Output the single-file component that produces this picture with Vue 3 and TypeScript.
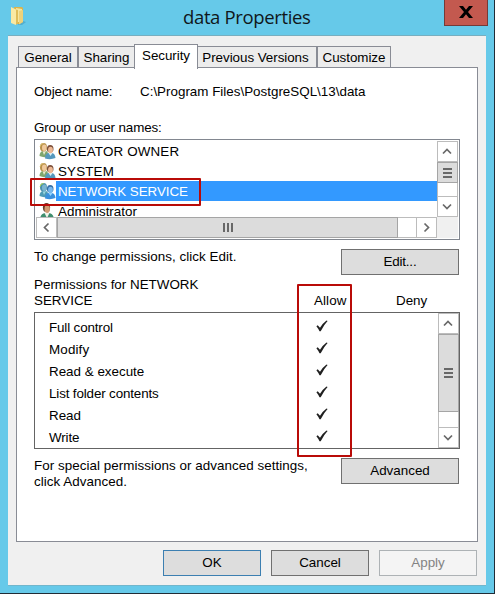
<script setup lang="ts">
interface Principal { name: string; kind: 'group' | 'user'; cls: string; selected?: boolean }

const tabs: { label: string; cls: string }[] = [
  { label: 'General', cls: 'general' },
  { label: 'Sharing', cls: 'sharing' },
  { label: 'Security', cls: 'active' },
  { label: 'Previous Versions', cls: 'previous' },
  { label: 'Customize', cls: 'customize' },
]
const principals: Principal[] = [
  { name: 'CREATOR OWNER', kind: 'group', cls: 'loose' },
  { name: 'SYSTEM', kind: 'group', cls: 'loose' },
  { name: 'NETWORK SERVICE', kind: 'group', cls: '', selected: true },
  { name: 'Administrator', kind: 'user', cls: '' },
]
const permissions: { label: string; cls: string }[] = [
  { label: 'Full control', cls: 'snug' },
  { label: 'Modify', cls: 'loose' },
  { label: 'Read & execute', cls: '' },
  { label: 'List folder contents', cls: 'snug' },
  { label: 'Read', cls: '' },
  { label: 'Write', cls: 'snug' },
]
</script>

<template>
  <div class="window">
    <header class="titlebar">
      <svg class="folder" width="18" height="21" viewBox="0 0 18 21">
        <path d="M10 14l6 2-4 3H8z" fill="#4297b8" opacity=".55" />
        <path d="M4 1h8l1 1v14l-4 2H4z" fill="#d9b44c" />
        <path d="M6 2l6 1v13H6z" fill="#f5e6a0" />
        <path d="M1 1l5 2.500v15.500l-5-2z" fill="#f9e9a3" />
        <path d="M6 3.500l2 .5v13l-2 2z" fill="#dfbd59" />
        <path d="M9 5l4-1v12l-4 2.500z" fill="#eed27b" />
      </svg>
      <h1>data Properties</h1>
      <button class="close" aria-label="Close">
        <svg width="14" height="12" viewBox="0 0 14 12">
          <path d="M0 0h4l3 3.800L10 0h4L9 6l5 6h-4L7 8.200 4 12H0l5-6z" fill="#000" />
        </svg>
      </button>
    </header>

    <main class="client">
      <nav class="tabs">
        <button v-for="t in tabs" :key="t.label" class="tab" :class="t.cls">{{ t.label }}</button>
      </nav>
      <section class="panel">
        <div class="object"><span class="key">Object name:</span><span class="path">C:\Program Files\PostgreSQL\13\data</span></div>
        <div class="group-label">Group or user names:</div>

        <div class="listbox">
          <div class="list-rows">
            <div v-for="p in principals" :key="p.name" class="principal" :class="{ selected: p.selected }">
              <svg class="people" width="18" height="18" viewBox="0 0 18 18">
                <template v-if="p.kind === 'group'">
                  <path d="M1.500 14q0-4.500 4-5.500l4 1 1 5q-5 1.500-9-.5z" :fill="p.selected ? '#4f9bb5' : '#7fa66e'" />
                  <path d="M4.500 9l1.500 4 2-4z" :fill="p.selected ? '#9bd6df' : '#e9ecd2'" />
                  <ellipse cx="5.500" cy="5.300" rx="3.500" ry="4.300" :fill="p.selected ? '#4a90ac' : '#b8914b'" />
                  <ellipse cx="6.300" cy="5.800" rx="2.300" ry="3.200" :fill="p.selected ? '#7bb5d1' : '#f0c99c'" />
                  <path d="M2 4.500q.5-3 3.500-3" fill="none" :stroke="p.selected ? '#b4d84e' : '#dfc274'" stroke-width="1" />
                  <path d="M7 16.500q0-5 3.500-5.500h3.500q3 .5 3.500 5-5 2-10.500.5z" :fill="p.selected ? '#3a8fdc' : '#5698bd'" />
                  <path d="M10.500 11l2 3 2-3z" :fill="p.selected ? '#98d8ff' : '#dcf1f5'" />
                  <ellipse cx="12.200" cy="6.800" rx="3.300" ry="3.800" :fill="p.selected ? '#346fa6' : '#7b4e38'" />
                  <ellipse cx="12.500" cy="8" rx="2.400" ry="3.200" :fill="p.selected ? '#79b9ed' : '#edb995'" />
                </template>
                <template v-else>
                  <path d="M2 18q0-6 5-7h4q5 1 5 7z" fill="#3f8e6e" />
                  <path d="M6.500 11l2.500 5 2.500-5z" fill="#f2f3e9" />
                  <ellipse cx="8.500" cy="5.500" rx="3.600" ry="4.500" fill="#623b29" />
                  <ellipse cx="9.200" cy="7" rx="2.700" ry="4" fill="#d09b72" />
                </template>
              </svg>
              <span class="name" :class="p.cls">{{ p.name }}</span>
            </div>
          </div>
          <div class="vscroll">
            <div class="sb"><svg width="11" height="7" viewBox="0 0 11 7"><path d="M1 5.500l4-4 4 4" /></svg></div>
            <div class="thumb"><i></i><i></i><i></i></div>
            <div class="track"></div>
            <div class="sb"><svg width="11" height="7" viewBox="0 0 11 7"><path d="M1 1.500l4 4 4-4" /></svg></div>
          </div>
          <div class="hscroll">
            <div class="sb"><svg width="7" height="11" viewBox="0 0 7 11"><path d="M5.500 1.500l-4 4 4 4" /></svg></div>
            <div class="thumb"><i></i><i></i><i></i></div>
            <div class="track"></div>
            <div class="sb"><svg width="7" height="11" viewBox="0 0 7 11"><path d="M1.500 1.500l4 4-4 4" /></svg></div>
          </div>
          <div class="corner"></div>
          <div class="mark mark-row"></div>
        </div>

        <div class="action edit-row">
          <p>To change permissions, click Edit.</p>
          <button class="btn wide">Edit...</button>
        </div>

        <div class="perm-head">
          <p>Permissions for NETWORK<br>SERVICE</p>
          <span class="allow">Allow</span>
          <span class="deny">Deny</span>
          <div class="mark mark-col"></div>
        </div>
        <div class="permbox">
          <div class="perm-rows">
            <div v-for="p in permissions" :key="p.label" class="perm">
              <span :class="p.cls">{{ p.label }}</span>
              <svg width="12" height="12" viewBox="0 0 12 12">
                <path d="M.4 6.300l1.300-1 2.300 2.500Q7 3 10.500.5l1.100.6Q8 4.800 4.700 11.300H3.500Q2.200 8.500.4 6.300z" fill="#202020" />
              </svg>
            </div>
          </div>
          <div class="vscroll">
            <div class="sb"><svg width="11" height="7" viewBox="0 0 11 7"><path d="M1 5.500l4-4 4 4" /></svg></div>
            <div class="thumb"><i></i><i></i><i></i></div>
            <div class="track"></div>
            <div class="sb"><svg width="11" height="7" viewBox="0 0 11 7"><path d="M1 1.500l4 4 4-4" /></svg></div>
          </div>
        </div>

        <div class="action adv-row">
          <p>For special permissions or advanced settings,<br>click Advanced.</p>
          <button class="btn wide">Advanced</button>
        </div>
      </section>
      <footer class="footer">
        <button class="btn ok">OK</button>
        <button class="btn">Cancel</button>
        <button class="btn" disabled>Apply</button>
      </footer>
    </main>
  </div>
</template>

<style>
body { margin: 0; overflow: hidden; }
</style>

<style scoped>
* { box-sizing: border-box; }
p, h1 { margin: 0; font-weight: 400; }
button { font: inherit; color: inherit; padding: 0; border-radius: 0; }
.window {
  width: 495px; height: 594px; background: #66c9e9;
  border-right: 1px solid #202c36; border-bottom: 1px solid #202c36;
  font: 13.400px/16px "Liberation Sans", Arial, sans-serif; color: #000;
  display: flex; flex-direction: column; padding: 0 6px 0 8px;
}
.titlebar { height: 35px; flex: none; display: flex; }
.folder { margin: 6px 0 0 2px; flex: none; }
h1 { margin: 3px 0 0 155px; width: 261px; font: 18.500px/28px "Open Sans", "Noto Sans", sans-serif; letter-spacing: -.36px; color: #10171b; white-space: nowrap; }
.close { width: 44px; height: 26px; flex: none; background: #c3594f; border: 1px solid #743b38; border-top: 0; display: flex; align-items: center; justify-content: center; }
.close svg { margin: 0 0 1px 0; }
.client { width: 478px; height: 551px; background: #f0f0f0; border-top: 1px solid #78aebf; border-bottom: 1px solid #71b6cc; padding: 8px 8px 0; display: flex; flex-direction: column; }
.tabs { height: 24px; flex: none; padding-left: 2px; display: flex; align-items: flex-end; position: relative; z-index: 1; }
.tab { height: 22px; background: #ececec; border: 1px solid #898c95; white-space: nowrap; letter-spacing: -.05px; padding-top: 1px; }
.general { width: 60px; }
.sharing { width: 56px; border-right: 0; }
.active { width: 64px; height: 25px; margin-bottom: -1px; background: #fff; border-bottom: 0; padding: 0 0 2px; }
.previous { width: 119px; border-left: 0; padding-right: 3px; }
.customize { width: 74px; }
.panel { width: 462px; height: 475px; flex: none; margin-top: -1px; background: #fff; border: 1px solid #898c95; padding: 16px 17px 0; }
.object { display: flex; height: 36px; }
.object .key { width: 106px; letter-spacing: -.1px; }
.path { white-space: nowrap; }
.group-label { height: 19px; letter-spacing: -.13px; }
.listbox { position: relative; width: 426px; height: 101px; border: 1px solid #828790; padding: 1px; display: grid; grid-template-columns: 401px 21px; grid-template-rows: 76px 21px; }
.list-rows { overflow: hidden; }
.principal { height: 20px; display: flex; align-items: center; padding-left: 2px; }
.people { flex: none; }
.name { height: 20px; line-height: 21px; flex: 1; padding-left: 2px; }
.selected .name { background: #3399ff; color: #fff; letter-spacing: -.05px; }
.loose { letter-spacing: .15px; }
.snug { letter-spacing: -.14px; }
.vscroll { display: flex; flex-direction: column; background: #fff; }
.sb { flex: none; width: 21px; height: 21px; border: 1px solid #bcbcbc; background: #fff; display: flex; align-items: center; justify-content: center; }
.sb path { fill: none; stroke: #686868; stroke-width: 1.700; }
.thumb { flex: none; border: 1px solid #a5a5a5; background: #dcdcdc; display: flex; align-items: center; justify-content: center; gap: 2px; }
.thumb i { background: #686868; }
.vscroll .thumb { height: 21px; flex-direction: column; }
.vscroll .thumb i { width: 9px; height: 2px; }
.vscroll .track { flex: 1; border: solid #bcbcbc; border-width: 0 1px; }
.hscroll { display: flex; }
.hscroll .thumb { width: 341px; height: 21px; }
.hscroll .thumb i { width: 2px; height: 9px; }
.hscroll .track { flex: 1; border: solid #bcbcbc; border-width: 1px 0; }
.corner { background: #f0f0f0; }
.mark { position: absolute; border: 2px solid #b90b08; border-radius: 1px; pointer-events: none; z-index: 2; }
.mark-row { left: -5px; top: 38px; width: 171px; height: 28px; }
.action { display: flex; justify-content: space-between; width: 425px; white-space: nowrap; }
.action p { letter-spacing: .045px; }
.edit-row { height: 37px; padding-top: 9px; }
.btn { width: 98px; height: 26px; border: 1px solid #707070; background: #dddddd; line-height: 24px; text-align: center; }
.wide { width: 118px; }
.edit-row .btn { letter-spacing: -.2px; }
.perm-head { position: relative; display: flex; height: 35px; width: 426px; }
.perm-head p { width: 280px; }
.allow, .deny { padding-top: 16px; width: 82px; flex: none; }
.mark-col { left: 263px; top: 7px; width: 55px; height: 173px; }
.allow { letter-spacing: .1px; }
.deny { width: 64px; }
.permbox { width: 426px; height: 137px; border: 1px solid #646464; display: flex; justify-content: space-between; }
.perm-rows { width: 300px; padding-top: 3px; }
.perm { height: 22px; display: flex; align-items: center; padding-left: 14px; }
.perm span { width: 267px; padding-top: 2px; }
.perm svg { margin-top: -2px; flex: none; }
.permbox .vscroll { width: 21px; }
.permbox .thumb { height: 78px; }
.adv-row { padding-top: 9px; }
.footer { display: flex; justify-content: flex-end; gap: 10px; padding: 8px 1px 0 0; }
.ok { border-color: #3c7fb1; }
.btn:disabled { color: #838383; background: #f4f4f4; border-color: #adb2b5; }
</style>
